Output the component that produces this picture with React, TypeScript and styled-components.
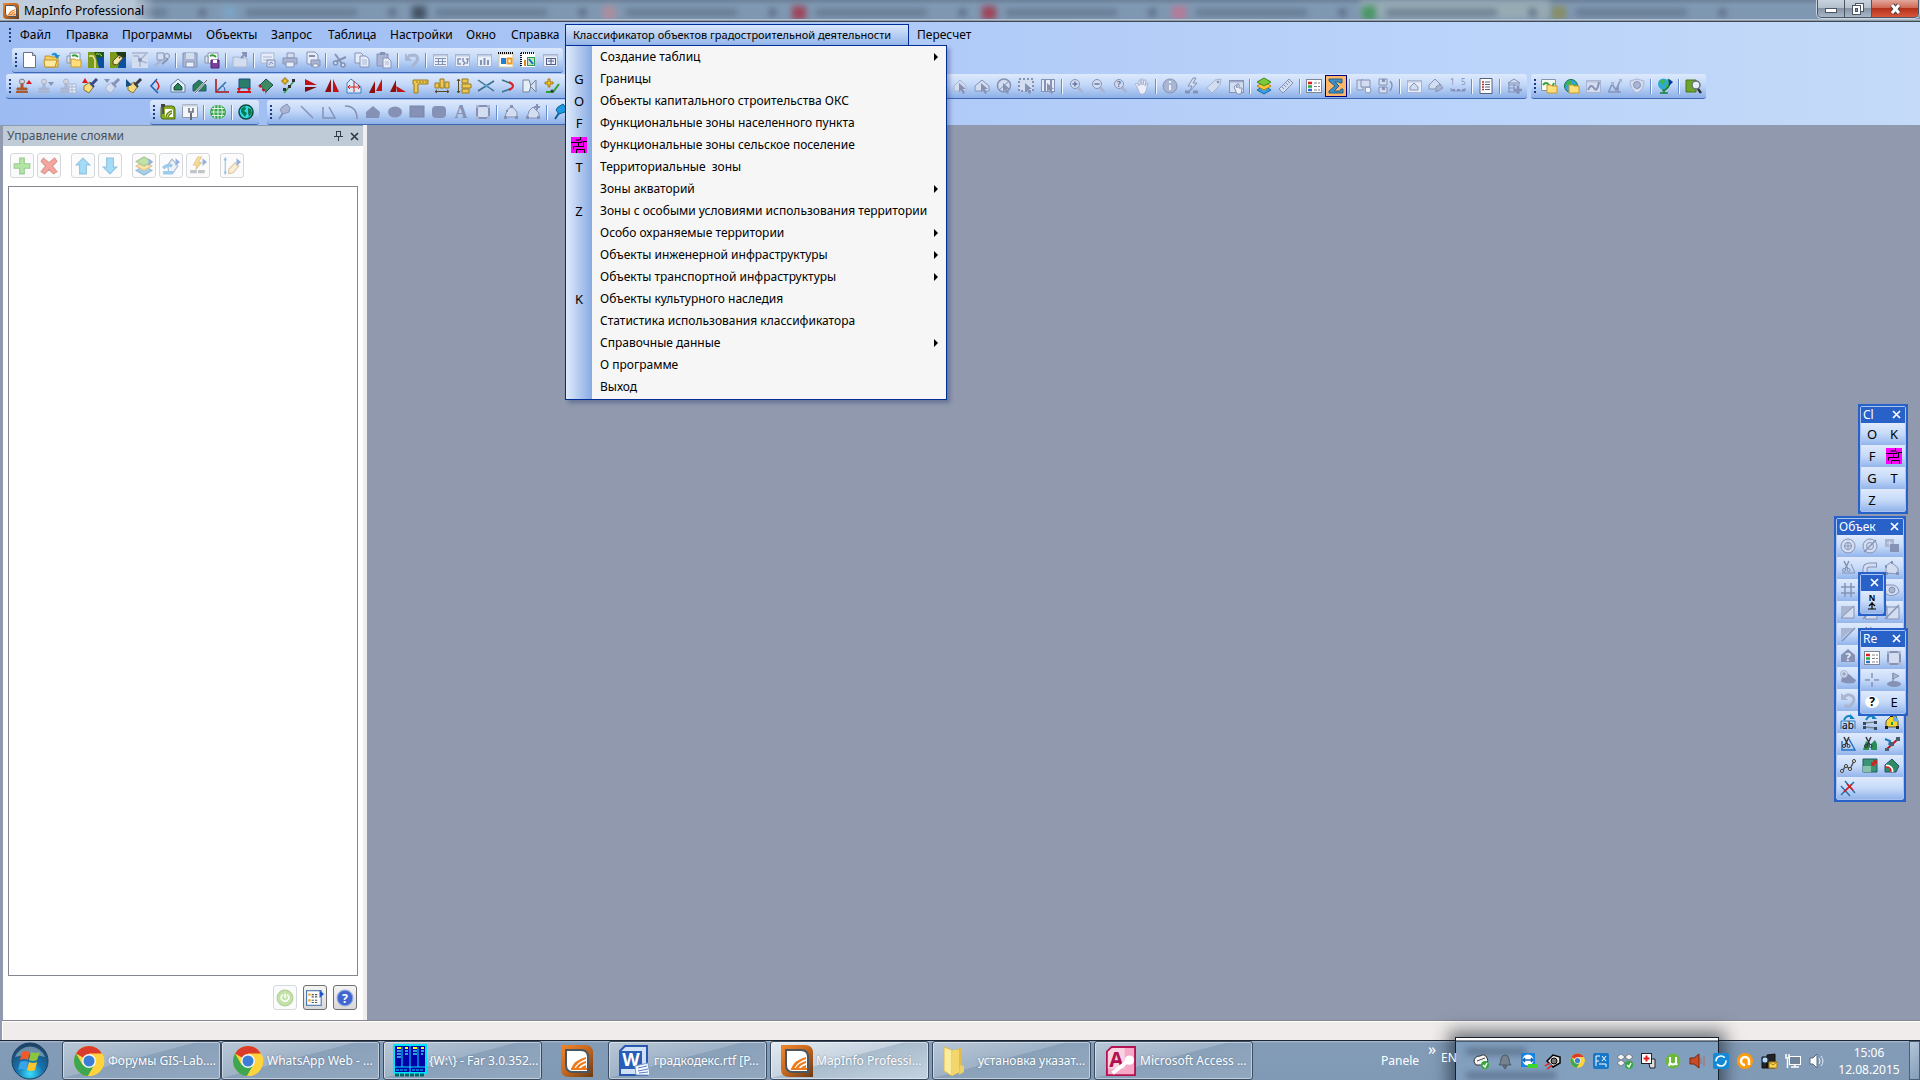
import React from 'react';
import styled, { createGlobalStyle, css } from 'styled-components';

const ui = '"Noto Sans", "Open Sans", "Liberation Sans", sans-serif';

const Global = createGlobalStyle`
  *, *::before, *::after { box-sizing: border-box; }
  html, body { margin: 0; height: 100%; }
  body { font-family: ${ui}; font-size: 12px; line-height: 16px; color: #000; overflow: hidden; }
  #root { height: 100%; }
  button { font: inherit; color: inherit; border: 0; padding: 0; margin: 0; background: none; }
  svg { display: block; flex: none; overflow: visible; }
`;

/* ---------- icon drawings ---------- */

const G = '#8592b6';
const M = '#a9b5d1';
const L = '#d3ddf0';

const line = (d: string, c: string = G, w = 1) => <path d={d} stroke={c} strokeWidth={w} fill="none" />;
const area = (d: string, f: string, c = 'none') => <path d={d} fill={f} stroke={c} />;

const win = (c: string, f: string) => (
  <>
    <rect x="1.5" y="2.5" width="14" height="12" fill={f} stroke={c} />
    <path d="M1 3.5h15" stroke={c} strokeWidth="2" opacity=".6" />
  </>
);
const lens = (
  <>
    <circle cx="7" cy="6" r="4.5" fill={L} stroke={G} />
    <path d="M10 9.5l4.500 5" stroke={M} strokeWidth="3" />
  </>
);
const cursor = (c: string) => area('M7 5v9l2-2 2 4 2-1-2-4h3z', c);
const scissors = (c: string) => (
  <>
    <path d="M4 1l4 8M9 1L5 9" stroke={c} strokeWidth="1.500" fill="none" />
    <circle cx="4" cy="10" r="1.500" fill="none" stroke={c} />
    <circle cx="8.500" cy="10" r="1.500" fill="none" stroke={c} />
  </>
);
const folder = (x: number, y: number) => (
  <path d={`M${x} ${y}h4l1 1h5v7h-10z`} fill="#ffdf7c" stroke="#c99a28" />
);
const stamp = (c: string, b: string) => (
  <>
    <circle cx="6" cy="3.500" r="2.500" fill="#d4d4da" stroke={c} />
    <path d="M5 6h2v4h4v2H1v-2h4z" fill={b} stroke={b} />
    <path d="M0 14h12" stroke={b} strokeWidth="2" />
  </>
);
const brush = (a: string, b: string, c: string) => (
  <>
    <path d="M2 8l6-4 4 4-5 7-5-3z" fill={a} stroke={b} />
    <path d="M8 5l4 4" stroke={c} strokeWidth="2" />
    <path d="M10 6l5-5" stroke={c} strokeWidth="3" />
  </>
);
const legend = (
  <>
    <rect x="0.500" y="1.500" width="15" height="13" fill="#fff" stroke="#7d8894" />
    <path d="M2 5h4" stroke="#e02020" strokeWidth="2.500" />
    <path d="M2 8.500h4" stroke="#25a84a" strokeWidth="2.500" />
    <path d="M2 12h4" stroke="#2f6fd0" strokeWidth="2.500" />
    <path d="M8 5h6M8 8.500h6M8 12h6" stroke="#7a7f88" strokeDasharray="3 1" />
  </>
);
const globe = (sea: string, land: string) => (
  <>
    <circle cx="8" cy="8" r="6.500" fill={sea} stroke="#0d7a3a" />
    <path d="M3 5l4-3 2 2-2 3-3 1zM9 8l4-3 1 4-3 4-2-2z" fill={land} />
  </>
);

const icons: Record<string, React.ReactNode> = {
  newDoc: <>{area('M1.500 .5h9l3 3v12h-12z', '#fff', '#6b7480')}{area('M10.500 .5v3h3', '#cfd6e0', '#6b7480')}</>,
  open: <>{area('M1 4h5l1 1h7v10H1z', '#f6cf62', '#c39222')}{area('M0 8h13l-2 7H1z', '#ffe9a0', '#c39222')}{line('M8 3q3-3 5 1', '#1b8fd6', 2)}{area('M10 3h6l-3 4z', '#1b8fd6')}</>,
  openMap: <>{area('M4 1h10v10H4z', '#fff', '#8694a8')}{line('M6 4q3-2 6 1', '#2e9f3d', 2)}{area('M1 4h3v7H1z', '#dce6f4', '#8694a8')}{folder(5, 7)}</>,
  map1: <><rect width="16" height="16" fill="#7a9a1c" /><path d="M8 5h8v11h-5z" fill="#0a4fa0" /><path d="M1 4h4l2 4v8" stroke="#f1e9a0" strokeWidth="1.500" fill="none" /><path d="M6 0h10v5l-7 1z" fill="#1c5a1c" /><path d="M8 2q4-1 6 2" stroke="#c2d94a" fill="none" /></>,
  map2: <><rect width="16" height="16" fill="#7a9a1c" /><path d="M10 5h6v11H8z" fill="#0a4fa0" /><path d="M6 0h10v5l-7 1z" fill="#1c3a1c" /><path d="M3 9l6-6 4 3-6 7-4-1z" fill="#f3e7b0" stroke="#5b4a1a" /><circle cx="9.500" cy="5.500" r="1" fill="#5b4a1a" /></>,
  mapOff: <><rect width="16" height="16" fill={L} /><path d="M0 1h16M1 4h5l3 5 6 2M8 15V8l6-6" stroke={M} strokeWidth="1.500" fill="none" /><circle cx="8" cy="8" r="2" fill={G} /></>,
  linkOff: <>{line('M1 14l6-6M9 7l5-5', M, 3)}{area('M3 1h7v7H3z', L, G)}{line('M8 12l6-5', G, 2)}<circle cx="13" cy="4" r="2.500" fill={L} stroke={G} /></>,
  save: <>{area('M1 1h14v14H1z', M, G)}{area('M4 1h8v6H4z', L)}{area('M4 10h8v5H4z', '#eaf0fa', G)}</>,
  saveMap: <>{area('M4 1h10v10H4z', '#fff', '#8694a8')}{line('M6 4q3-2 6 1', '#2e9f3d', 2)}{area('M1 4h3v7H1z', '#dce6f4', '#8694a8')}{area('M7 8h8v8H7z', '#7b3f9c', '#552277')}{area('M9 8h4v3H9z', '#fff')}</>,
  closeF: <>{area('M1 5h6l1 1h7v9H1z', L, M)}{line('M9 6l5-5M10 1h4v4', G, 2)}</>,
  winMap: <>{area('M1 1h13v10H1z', '#e6edf9', M)}{line('M3 5h9M3 8h9', M)}{area('M7 8h8v7H7z', L, G)}{line('M9 13l2-3 2 2', G)}</>,
  print: <>{area('M5 1h7v5H5z', L, G)}{area('M1 6h14v6H1z', M, G)}{area('M4 10h8v5H4z', '#e6edf9', G)}</>,
  pdf: <>{area('M3 0h8l3 3v9H3z', '#e6edf9', G)}{line('M5 4h6', G, 2)}{area('M7 8h9v6H7z', M, G)}{area('M9 12h5v3H9z', '#fff', G)}</>,
  cut: <>{line('M3 2l8 11M14 5L3 10', G, 2)}<circle cx="3.500" cy="11" r="2" fill={L} stroke={G} strokeWidth="1.500" /><circle cx="11" cy="13" r="2" fill={L} stroke={G} strokeWidth="1.500" /></>,
  copy: <>{area('M1 1h6l2 2v8H1z', '#e6edf9', G)}{area('M6 4h6l3 3v8H6z', '#e6edf9', G)}{line('M8 8h5M8 10h5M8 12h5', M)}</>,
  paste: <>{area('M1 2h11v12H1z', M, G)}{area('M4 0h5v3H4z', G)}{area('M7 6h5l3 3v7H7z', '#e6edf9', G)}{line('M9 10h4M9 12h4', M)}</>,
  undo: <>{line('M4 4l6-1q5 1 3 6l-5 6', M, 3)}{area('M1 1v8h7z', M)}</>,
  tbl: <>{win(M, '#eaf0fa')}{line('M3 6.500h11M3 9.500h11M3 12.500h11M6.500 6v7M10.500 6v7', G)}</>,
  winGraph: <>{win(M, '#eaf0fa')}{line('M7 7H4v5h3M9 6v3l2 2-2 2M12 7h2l-1 5', G, 1.5)}</>,
  winBar: <>{win(M, '#eaf0fa')}{line('M5 13V8M8.500 13V6M12 13V8', G, 2)}</>,
  layout1: <><rect x="1" y="2" width="14" height="13" fill="#fff" stroke="#d0c79a" /><path d="M0 1h16" stroke="#000" strokeDasharray="1 1" strokeWidth="2" /><rect x="3" y="6" width="5" height="6" fill="#1f7fd4" /><rect x="9.500" y="6.500" width="4" height="5" fill="#fff" stroke="#f09a1c" strokeWidth="2" /></>,
  layout2: <><rect x="1" y="1" width="14" height="14" fill="#fff" /><path d="M1 1h14M1 1v14" stroke="#111" strokeDasharray="1 1" strokeWidth="2" /><path d="M5 14V8" stroke="#e08a1a" strokeWidth="2" /><rect x="7.500" y="5.500" width="7" height="8" fill="#bfe6c4" stroke="#2c9c50" /><path d="M9 7l4 5" stroke="#1b6fc0" strokeWidth="2" /></>,
  winSet: <>{win(M, '#eaf0fa')}<rect x="4.500" y="6.500" width="9" height="6" fill="none" stroke="#4e5c8a" /><path d="M6 9h6M9 7v5" stroke="#4e5c8a" /></>,
  stamp: <>{stamp('#777', '#a75b33')}{area('M10 6l3-4 3 4z', '#e01818')}</>,
  stampOff: <>{stamp(M, M)}{area('M10 4h6l-3 4z', G)}</>,
  stampTbl: <>{stamp(M, M)}{area('M9 6h7v9H9z', '#e6edf9', M)}{line('M9 9h7M9 12h7M12 6v9', M)}</>,
  brush: <>{brush('#f6dc7a', '#8a7430', '#3b4a86')}{area('M0 5l3-5 3 5z', '#e01818')}</>,
  brushOff: <>{brush(L, M, G)}{area('M0 1h6L3 5z', G)}</>,
  brushSel: <>{brush('#f6dc7a', '#8a7430', '#3b3b46')}{area('M0 1v8l6-2z', '#134f86')}</>,
  angle: <>{line('M9 1L3 8l7 7', '#1b5fae', 1.5)}{line('M8 3q5 5 1 9', '#d02020', 1.5)}</>,
  houseBuf: <>{area('M1 14V7l7-6 7 6v7z', '#e7f0fa', '#5a7fae')}{area('M4 12V9l4-4 4 4v3z', '#2b7d55', '#174b3b')}</>,
  houseCut: <>{area('M1 13V7l6-5 7 5v6z', '#2b7d55', '#1c5a80')}{line('M3 15L15 2', '#eef', 2)}{line('M3 15L15 2', '#556')}</>,
  axes: <>{line('M2 1v13h13', '#b01010', 1.5)}{line('M3 13L12 4', '#2a6fae', 1.5)}{line('M8 7q3 2 3 6', '#2a6fae')}</>,
  monitor: <>{area('M3 1h11v9H3z', '#2b7d6a', '#1d4f80')}{line('M1 14h14', '#d01818', 2)}{area('M1 10h4l-2 4zM11 10h4l-2 4z', '#d01818')}</>,
  diamond: <>{area('M8 1l7 6-7 7-6-7z', '#3c8a62', '#1f4f4a')}<path d="M1 7l7 8" stroke="#d01818" strokeWidth="2" strokeDasharray="3 2" /></>,
  nodes: <>{line('M4 15L14 3', '#35a045', 1.5)}{area('M4 0h2v2h2v2H6v2H4V4H2V2h2z', '#f6c52a', '#a67b10')}{area('M12 1h3v3h-3zM3 10h3v3H3zM8 7h3v3H8z', '#333')}</>,
  flipH: <>{area('M3 1l12 6H3z', '#c01414')}{area('M3 9h12L3 14z', '#7c0f0f')}</>,
  flipV: <>{area('M7 1v13H1z', '#8c1010')}{area('M9 1v13h6z', '#c01414')}</>,
  moveBox: <>{area('M1 15V5l4-4 10 8v6z', '#dceaf8', '#447fc0')}{line('M2 9h12M8 3v11M2 9l2-2M2 9l2 2M14 9l-2-2M14 9l-2 2', '#d02020')}</>,
  copyTri: <>{area('M7 3v12H1z', '#8c1010')}{area('M14 1v12H8z', '#c01414')}</>,
  rotTri: <>{area('M6 2v12H0z', '#8c1010')}{area('M6 8l10 6H7z', '#c01414')}</>,
  ruler: <>{area('M1 2h15v4H6v9H2V6H1z', '#edc84f', '#9b7a1e')}{line('M5 3v2M8 3v2M11 3v2M14 3v2', '#9b7a1e')}</>,
  distH: <>{area('M1 5h4v5H1zM6 1h4v9H6zM11 4h4v6h-4z', '#edc84f', '#9b7a1e')}{line('M1 13.500h14M3 12l-2 1.500L3 15M13 12l2 1.500-2 1.500', '#554a20')}</>,
  distV: <>{area('M6 1h6v4H6zM6 6h9v4H6zM6 11h7v4H6z', '#edc84f', '#9b7a1e')}{line('M2.500 1v14M1 3l1.500-2L4 3M1 13l1.500 2L4 13', '#554a20')}</>,
  cross: <>{line('M0 2l16 11', '#3d6f8c', 1.5)}{line('M0 13L16 3', '#3d6f8c', 1.5)}<circle cx="8.500" cy="8" r="1.500" fill="#4aa3e0" /></>,
  curve: <>{line('M2 2l8 3', '#3d6f8c', 1.5)}{line('M2 14l8-3', '#3d6f8c', 1.5)}{line('M9 4q8 4 0 8', '#e02020', 2)}</>,
  polyOff: <>{area('M1 2h6l2 6-2 6H1z', '#e7edf5', '#77839b')}{area('M8 8l6-6v12z', '#cfe0f0', '#77839b')}</>,
  snap: <>{area('M4 1h2v3h3v2H6v3H4V6H1V4h3z', '#f6c52a', '#a67b10')}{line('M2 14h7l6-8', '#2ea02e', 2)}<circle cx="8" cy="13" r="1.500" fill="#333" /></>,
  tools: <>{area('M1 4q0-2 2-2h9q3 0 3 3v10H3q-2 0-2-2z', '#8aac20', '#4f6a10')}{area('M5 5h6q2 0 2 2v6H5z', '#fff')}{line('M6 13q1-5 6-6M8 13q1-3 4-4', '#6a8a1c', 1.5)}{line('M3 2v8', '#555', 2)}{area('M1 0h4v3H1z', '#444')}</>,
  wrench: <>{area('M0.500 .5h15v13H.5z', '#f4f6fa', '#9099a8')}{line('M0 1.500h16', '#c6d0de', 2)}{line('M9 9v7', '#666e7c', 2)}{line('M7 4v4h4V4', '#666e7c', 1.5)}</>,
  globeG: <><ellipse cx="8" cy="8" rx="8" ry="7" fill="#3aa54d" /><path d="M1 8h14M8 1v14M2 4.500h12M2 11.500h12M5 2q-3 6 0 12M11 2q3 6 0 12" stroke="#dff3e3" fill="none" /></>,
  globeC: <><circle cx="8" cy="8" r="7" fill="#2fdbe6" stroke="#0b4a3a" strokeWidth="1.500" />{area('M3 5l4-3 1 3-2 2 3 2-2 4-4-5zM10 4l3 1 1 4-3 4-1-4z', '#0e7a52')}</>,
  pinOff: <>{area('M5 3l5-3 3 4-1 4-6 2-3-4z', M, G)}{line('M6 9l-4 6', G, 2)}</>,
  lineI: line('M2 2l12 12', G, 1.5),
  poly: line('M2 3v11h12L8 3', G, 1.5),
  arc: line('M2 2q12 0 12 13', G, 1.5),
  house: area('M1 14V8l7-6 7 6-1 6z', G),
  ellipse: <ellipse cx="8" cy="8" rx="7" ry="5.500" fill={G} />,
  rect: <rect x="1" y="2" width="14" height="11" fill={G} stroke="#7785ab" />,
  rrect: <rect x="1" y="2" width="14" height="12" rx="4" fill={G} />,
  textA: <text x="8" y="14" fontSize="18" fontWeight="700" textAnchor="middle" fontFamily="Liberation Serif, serif" fill={G}>A</text>,
  frame: <><rect x="2" y="2" width="12" height="12" fill={L} stroke={G} strokeWidth="2" /><path d="M1 1h3v3H1zM12 1h3v3h-3zM1 12h3v3H1zM12 12h3v3h-3z" fill={M} /></>,
  reshape: <>{area('M2 13l2-7 5-4 5 6v5z', L, G)}{area('M1 12h3v3H1zM7 1h3v3H7zM12 12h3v3h-3zM3 6h2v2H3z', G)}</>,
  addNode: <>{area('M2 14l2-7 4-4 6 6v5z', L, G)}{area('M1 12h3v3H1zM12 12h3v3h-3z', G)}{line('M12 0v6M9 3h6', G, 2)}</>,
  pinBlue: <>{area('M5 3l5-3 3 4-1 4-6 2-3-4z', '#1c9be0', '#0a5f9c')}{line('M6 9l-4 6', '#0a5f9c', 2)}{area('M12 1l4 3-4 4z', '#0a3fb0')}</>,
  selPoly: <>{area('M2 13V8l6-6 6 6v5z', L, M)}{cursor(G)}</>,
  selHouse: <>{area('M1 13V8l7-6 7 6v5z', L, G)}{cursor(G)}</>,
  selCirc: <><circle cx="8" cy="7.500" r="6.500" fill={L} stroke={G} strokeWidth="1.500" />{cursor(G)}{line('M3 12L13 3', G)}</>,
  selRect: <><rect x="1" y="1" width="14" height="12" fill={L} stroke={G} strokeDasharray="2 2" strokeWidth="2" />{cursor(G)}</>,
  selGrid: <><rect x="1.500" y="1.500" width="13" height="12" fill="#e6edf9" stroke={G} />{line('M5 1v13M11 1v13', G, 2)}{cursor(G)}</>,
  zin: <>{lens}{line('M4.500 6h5M7 3.500v5', '#6475a4', 1.5)}</>,
  zout: <>{lens}{line('M4.500 6h5', '#6475a4', 1.5)}</>,
  zq: <>{lens}<text x="7" y="9" fontSize="9" fontWeight="700" textAnchor="middle" fill="#6475a4">?</text></>,
  hand: area('M3 9L1 6l2-1 2 3V2h2v5V1h2v6l1-5h2l-1 6 2-3h1l-2 8-2 3H6z', '#e9eef8', M),
  info: <><circle cx="8" cy="8" r="7" fill={M} stroke={G} /><path d="M8 7v5M8 3v2" stroke="#eaf0fa" strokeWidth="2" /></>,
  hot: <>{area('M9 0L4 8h4l-2 5 7-8H9l3-5z', L, G)}{line('M1 14h5M9 14h5', G, 3)}</>,
  tag: <>{area('M1 10l8-8 6-1-1 6-8 8z', L, M)}<circle cx="12" cy="4" r="1.300" fill={G} /></>,
  dragWin: <>{win(G, L)}{area('M6 9l2-2 1 3V6h2v4h3l-1 6H9z', '#e9eef8', G)}</>,
  layers: <>{area('M1 12l7-4 7 4-7 4z', '#3c9fe0', '#1c6aa5')}{area('M1 8l7-4 7 4-7 4z', '#ffc83c', '#bc8510')}{area('M1 4l7-4 7 4-7 4z', '#7cc83c', '#3f8a18')}</>,
  measure: <>{area('M1 11L11 1l4 4L5 15z', L, G)}{line('M4 9l2 2M6 7l2 2M8 5l2 2M10 3l2 2', G)}</>,
  legend,
  sigma: area('M1 1h13v4h-2l-1-1H7l4 4-5 5h6l1-2h2v4H1v-2l6-5-6-5z', '#3f8fc4', '#24618c'),
  distA: <>{area('M1 2h6v10H1z', L, G)}{area('M5 2h9v7H5z', L, G)}<circle cx="12" cy="12" r="3" fill="#eef2fa" stroke={G} /></>,
  distB: <>{area('M1 1h8v6H1zM1 9h8v6H1z', L, G)}{area('M4 1h3v3H4zM4 9h3v3H4z', G)}{line('M12 3q4 4 0 10', G, 1.5)}</>,
  winH: <>{win(M, '#e6edf9')}{area('M4 12V9l4-4 4 4v3z', L, G)}</>,
  dupH: <>{area('M1 11V7l6-6 6 6-3 4z', L, G)}{area('M8 14V9l4-3 3 4z', M, G)}</>,
  scale15: <><text x="0" y="7" fontSize="8" fill={G}>1</text><text x="11" y="7" fontSize="8" fill={G}>5</text>{line('M1 10v3h14v-3', G)}<path d="M2 12h13" stroke={G} strokeWidth="2" strokeDasharray="3 2" /></>,
  list: <>{area('M2 .5h12v15H2z', '#fff', '#56607a')}{line('M4 4h2M4 6.500h2M4 9h2M4 11.500h2', '#b03030', 1.5)}{line('M7 4h5M7 6.500h5M7 9h5M7 11.500h5', '#56607a')}</>,
  dbAdd: <>{area('M8 1l6 4H2z', L, G)}{line('M2 7h12M2 10h7M2 14h12M3 5v9M8 6v8', G)}{line('M12 8v8M8 12h8', G, 2.500)}</>,
  wmsF: <>{area('M0.500 1.500h14v11H.5z', '#f5faf2', '#8694a8')}{line('M2 7q3-4 6 0t5-2', '#2e9f3d', 2)}{folder(6, 7)}</>,
  globeF: <>{globe('#3aa0e6', '#3fb53f')}{folder(6, 7)}</>,
  mapEd: <>{win(M, L)}{line('M3 12q3-7 6-2t5-6', G, 2)}</>,
  nodeEd: <>{line('M2 13l3-7 4 6 4-9M1 14h13M11 7v7', G, 1.5)}{area('M4 4h3v3H4zM12 1h3v3h-3z', M)}</>,
  shield: <>{area('M1 3l7-2 7 2q0 9-7 12Q1 12 1 3z', L, M)}<circle cx="8" cy="7" r="3.500" fill={M} stroke={G} /></>,
  globeStand: <><circle cx="6.500" cy="6" r="5.500" fill="#2ca9d8" /><path d="M3 3q4-3 5 1l-3 3zM8 7l3-1-2 5z" fill="#47b83f" /><path d="M11 1q4 7-3 11H5M7 12v3M3 15h8" stroke="#15803a" strokeWidth="1.500" fill="none" /><path d="M12 1l4 3-4 4z" fill="#0a2fb0" /></>,
  findMap: <>{area('M1 2h10v12H1z', '#6da52b', '#48761a')}<circle cx="11" cy="7" r="4" fill="#e6f1f6" stroke="#66707c" strokeWidth="1.500" />{line('M13 11l3 4', '#333', 2.500)}</>,
  target: <><circle cx="8" cy="8" r="7" fill={L} stroke={G} /><circle cx="8" cy="8" r="3.500" fill="none" stroke={G} />{line('M4 8h8M8 4v8', G)}</>,
  targetS: <><circle cx="8" cy="8" r="7" fill={L} stroke={G} /><circle cx="8" cy="8" r="3.500" fill="none" stroke={G} />{line('M2 14L14 2', G, 1.5)}</>,
  combine: <><rect x="1" y="1" width="9" height="8" fill={M} /><rect x="6" y="6" width="9" height="8" fill={G} />{line('M3 5h5M5.500 3v5', L)}</>,
  sciOff: <>{scissors(G)}{area('M11 4l4 9H2', 'none', G)}</>,
  pipe: <>{line('M3 14V9q0-4 5-4h7', G, 5)}{line('M3 13V9q0-4 5-4h6', L, 3)}</>,
  hull: <>{area('M2 13V6l5-4 7 6v6z', L, G)}{area('M1 5h2v3H1zM7 1h2v3H7zM1 12h3v3H1zM12 12h3v3h-3z', G)}</>,
  hash: line('M5 1v14M11 1v14M1 5h14M1 11h14', G, 1.5),
  ring: <><path d="M1 3h7q6 0 7 7-6 6-13 2z" fill={L} stroke={G} /><circle cx="8" cy="8" r="3" fill={M} stroke={G} /></>,
  sq: <>{area('M1 2h13v12H1z', M)}{area('M1 14L14 2v12z', L, G)}</>,
  sqTri: <>{area('M1 2h13L1 13z', M)}{line('M2 15L15 2', G, 1.5)}</>,
  sqS: <>{area('M3 3h12v12H3z', L, G)}{line('M1 15L15 1M2 1v6', G, 1.5)}</>,
  houseQ: <>{area('M1 14V7l7-6 7 6v7z', G)}<text x="8" y="13" fontSize="11" fontWeight="700" textAnchor="middle" fill="#eef2fa">?</text></>,
  blob: <>{area('M1 12l1-6q5-4 8-1t6 5q-1 6-15 2z', G)}<circle cx="4" cy="4" r="3.500" fill={L} stroke={M} />{line('M4 2v4M2 4h4', G)}</>,
  undoR: <>{line('M4 5q4-4 8-1t0 8-7 1', M, 3)}{area('M1 1v7h7z', M)}</>,
  renAb: <><text x="8" y="15" fontSize="10" textAnchor="middle" fill="#000">ab</text>{line('M1 15V7h14v8', '#2a7fc0')}{line('M4 6q3-6 8-3', '#1583c8', 2)}{area('M10 0l5 5h-5z', '#1583c8')}</>,
  lnArr: <>{line('M2 9l12-1M2 13l12 1', '#7a8797', 1.5)}{area('M1 8h3v3H1zM12 7h3v3h-3zM1 12h3v3H1zM12 13h3v3h-3z', '#3b4a58')}{line('M4 6q3-6 8-3', '#1583c8', 2)}{area('M10 0l5 5h-5z', '#1583c8')}</>,
  yPoly: <>{area('M2 13V7l5-5h5l2 5v6z', '#f8d42a', '#555')}{area('M9 2l5 3v3L9 7z', '#5ab2e6')}{area('M1 12h3v3H1zM12 12h3v3h-3zM6 1h3v2H6z', '#222')}{line('M8 8v3', '#1c9a3a', 2)}</>,
  sciPoly: <>{line('M2 5v9h13L9 3', '#2474c4', 1.5)}{scissors('#333')}</>,
  sciG: <>{area('M1 14L4 5l3 3v6z', '#2b8d55')}{area('M9 14V8l4-4 2 4v6z', '#2b8d55')}{scissors('#333')}</>,
  redLn: <>{line('M3 13L14 3', '#c81414', 2)}{line('M1 3l5 2-1 4', '#1b78c0', 2)}{area('M12 1h4v4h-4zM1 12h4v3H1zM6 6h4v4H6z', '#4d5d6c')}</>,
  spline: <>{line('M2 13l4-5 4 3 4-8', '#555e68', 1.5)}<circle cx="2" cy="13" r="1.500" fill="#fff" stroke="#333" /><circle cx="6" cy="8" r="1.500" fill="#fff" stroke="#333" /><circle cx="10" cy="11" r="1.500" fill="#fff" stroke="#333" /><circle cx="14" cy="3" r="1.500" fill="#fff" stroke="#333" /></>,
  resize: <>{area('M1 1h14v13H1z', '#3a9575', '#1d5c63')}{area('M1 8h8v6H1z', '#86c2a8')}{line('M10 7l4-4M10 4v3h3M14 6V3h-3', '#e01818', 1.5)}</>,
  houseR: <>{area('M1 14V7l7-6 7 7-3 6z', '#2f8a68', '#24526a')}{line('M2 8q6 0 6 6', '#fff', 3)}{line('M2 9q5 0 5 5', '#d01818', 1.5)}</>,
  crossX: <>{line('M1 15L14 2M5 1l10 12M1 6l9 10', '#2672b0', 1.5)}{line('M4 12L12 4M7 4l6 6', '#e01818', 1.5)}</>,
  north: <><text x="8" y="7" fontSize="8" fontWeight="700" textAnchor="middle" fill="#000">N</text>{line('M8 8v7M5 12l3-3 3 3M4 15h8', '#000', 1.2)}</>,
  plusT: line('M8 1v5M8 10v5M1 8h5M10 8h5', G, 1.5),
  flag: <><ellipse cx="8" cy="12" rx="7" ry="3" fill={G} />{line('M7 12V1', G, 1.5)}{area('M7 1l6 3-6 3z', M, G)}</>,
  askB: <><ellipse cx="8" cy="8" rx="7" ry="6" fill="#fff" /><text x="8" y="12" fontSize="12" fontWeight="700" textAnchor="middle" fill="#000">?</text></>,
  magenta: <><rect width="16" height="16" fill="#ff00ff" /><path d="M9.500 0v3h-5M0 5.500h11v-2M7.500 5.500v4h5M2.500 9.500h5M2.500 9.500v3M5.500 12.500h8v3.500M5.500 12.500v3.500M16 4.500h-3.500v5" stroke="#000" fill="none" /></>,
};

const Icon = ({ name, size = 16 }: { name: string; size?: number }) => (
  <svg width={size} height={size} viewBox="0 0 16 16" aria-hidden="true">{icons[name]}</svg>
);

/* ---------- large icons ---------- */

const Chrome = ({ size = 30 }: { size?: number }) => (
  <svg width={size} height={size} viewBox="0 0 32 32" aria-hidden="true">
    <circle cx="16" cy="16" r="15" fill="#ffd33c" />
    <path d="M16 16L3 8.500A15 15 0 0 1 29 8.500H16z" fill="#db3b2b" />
    <path d="M16 16l-6.500 3.700L3 8.500A15 15 0 0 0 15 31l7-12z" fill="#3fa650" />
    <path d="M16 9h13.500A15 15 0 0 1 15 31l7-12z" fill="#ffd33c" />
    <circle cx="16" cy="16" r="7" fill="#f4f6f8" />
    <circle cx="16" cy="16" r="5.500" fill="#3a7fd5" />
  </svg>
);
const MapInfo = ({ size = 32 }: { size?: number }) => (
  <svg width={size} height={size} viewBox="0 0 32 32" aria-hidden="true">
    <defs>
      <linearGradient id="mi" x1="0" x2="1" y2="1"><stop stopColor="#f0862a" /><stop offset=".45" stopColor="#c96a20" /><stop offset="1" stopColor="#6b3a15" /></linearGradient>
    </defs>
    <path d="M0 0h24q8 0 8 8v24H8q-8 0-8-8z" fill="url(#mi)" />
    <path d="M5 5h15q7 0 7 7v15H12q-7 0-7-7z" fill="#fff" stroke="#4b5660" strokeWidth="2" />
    <path d="M10 24q3-9 15-12v2q-9 3-12 10zM14 24q3-6 11-8v2q-6 2-8 6zM19 24q2-3 6-4v4z" fill="#ee7a1c" />
    <path d="M10 24h16" stroke="#ee7a1c" strokeWidth="2" />
  </svg>
);
const Far = () => (
  <svg width="32" height="32" viewBox="0 0 32 32" aria-hidden="true">
    <rect width="32" height="28" fill="#0000a8" stroke="#00e5ff" strokeWidth="2" />
    <path d="M16 0v28M8 2v20M24 2v20M0 22h32" stroke="#00e5ff" />
    <path d="M3 3h4M19 3h4M27 3h3M11 3h3" stroke="#ffff00" strokeWidth="2" />
    <path d="M3 6h4M3 9h4M3 12h4M11 6h3M11 9h3M19 6h4M19 9h4M27 6h3M27 9h2" stroke="#3fd5f0" strokeWidth="1.500" />
    <path d="M2 25h12M18 25h12" stroke="#00e5ff" strokeDasharray="3 1" />
    <path d="M1 30h30" stroke="#006868" strokeWidth="3" strokeDasharray="4 1" />
  </svg>
);
const Word = () => (
  <svg width="32" height="32" viewBox="0 0 32 32" aria-hidden="true">
    <path d="M6 1h22v29H1V6z" fill="#cfe0f7" stroke="#2a58b0" strokeWidth="2" />
    <path d="M1 6h22v18H1z" fill="#2a5db8" />
    <text x="12" y="21" fontSize="18" fontWeight="700" textAnchor="middle" fill="#fff">W</text>
    <path d="M16 21l13-3 2 12H17z" fill="#f6f9ff" stroke="#7c9ac8" />
    <path d="M19 23l9-2M19 26l10-2M20 28l9-1" stroke="#5b7fc0" />
  </svg>
);
const Folder = () => (
  <svg width="32" height="32" viewBox="0 0 32 32" aria-hidden="true">
    <path d="M8 6l10-3 1 24-9 3z" fill="#e2bd48" />
    <path d="M1 2l8 3v26l-8-5z" fill="#fbeb9e" stroke="#dcb850" />
    <path d="M10 5h6v22l-7 4V7z" fill="#f3d76c" />
    <path d="M17 20l4 1v6l-5 3z" fill="#ecd06a" />
  </svg>
);
const Access = () => (
  <svg width="32" height="30" viewBox="0 0 32 32" aria-hidden="true">
    <path d="M6 1h25v30H1V6z" fill="#f6a8c6" stroke="#b31350" strokeWidth="2" />
    <path d="M2 6l5-4h13v22H2z" fill="#f9d3e2" />
    <text x="11" y="22" fontSize="22" fontWeight="700" textAnchor="middle" fill="#b0104f">A</text>
    <circle cx="25" cy="15" r="5" fill="#fff" />
    <path d="M22 17L7 29" stroke="#fff" strokeWidth="4" />
  </svg>
);
const Orb = () => (
  <svg width="38" height="38" viewBox="0 0 38 38" aria-hidden="true">
    <defs>
      <radialGradient id="orb" cx=".5" cy=".85" r=".8"><stop stopColor="#39e0ff" /><stop offset=".45" stopColor="#1673ad" /><stop offset="1" stopColor="#1d4468" /></radialGradient>
    </defs>
    <circle cx="19" cy="19" r="18" fill="url(#orb)" stroke="#1b4160" />
    <path d="M4 15a16 16 0 0 1 30 0q-15-5-30 0z" fill="#fff" opacity=".35" />
    <path d="M11 10q4-2 8 0l-2 8q-4-2-8 0z" fill="#f0592a" />
    <path d="M20 10q4 2 9 0l-3 8q-4 2-8 0z" fill="#8cc63e" />
    <path d="M9 20q4-2 8 0l-2 8q-4-2-8 0z" fill="#3ba3ea" />
    <path d="M18 20q4 2 8 0l-2 8q-4 2-8 0z" fill="#fcc62b" />
  </svg>
);

/* ---------- window frame ---------- */

const Screen = styled.div`
  position: relative;
  display: flex;
  flex-direction: column;
  height: 100vh;
  min-height: 400px;
  overflow: hidden;
  background: #9099ae;
`;
const TitleBar = styled.header`
  position: relative;
  display: flex;
  align-items: flex-start;
  justify-content: space-between;
  height: 22px;
  flex: none;
  background: linear-gradient(#6d8199, #8099b3 5px, #7f97b2 19px, #e4edf6 20px, #3d4854 21px);
`;
const TabGhosts = styled.div`
  position: absolute;
  inset: 0 0 3px 30px;
  display: flex;
  overflow: hidden;
`;
const TabGhost = styled.div<{ $on?: boolean }>`
  display: flex;
  align-items: center;
  gap: 10px;
  flex: none;
  width: 190px;
  padding: 6px 14px 0 2px;
  filter: blur(3px);
  background: ${(p) => (p.$on ? '#97abb4' : 'transparent')};
`;
const GhostIcon = styled.i<{ $c: string }>`
  width: 14px;
  height: 14px;
  opacity: 0.75;
  background: ${(p) => p.$c};
`;
const GhostBar = styled.i`
  flex: 1;
  height: 7px;
  margin-right: 22px;
  background: #5d7088;
  opacity: 0.75;
`;
const GhostX = styled.i`
  width: 7px;
  height: 7px;
  background: #56677e;
`;
const AppTitle = styled.h1`
  position: relative;
  display: flex;
  align-items: center;
  gap: 5px;
  height: 20px;
  margin: 0;
  padding: 2px 12px 0 3px;
  font-size: 12px;
  font-weight: 400;
  background: linear-gradient(90deg, rgba(200, 213, 227, 0.9), rgba(200, 213, 227, 0.8) 85%, rgba(200, 213, 227, 0));
`;
const Caption = styled.div`
  position: relative;
  display: flex;
  height: 18px;
  margin-right: 1px;
  border: 1px solid #4b5664;
  border-top: 0;
  border-radius: 0 0 5px 5px;
  overflow: hidden;
  box-shadow: 0 0 0 1px rgba(255, 255, 255, 0.6);
`;
const CaptionButton = styled.button<{ $close?: boolean }>`
  display: grid;
  place-items: center;
  width: ${(p) => (p.$close ? 46 : 27)}px;
  border-right: ${(p) => (p.$close ? '0' : '1px solid #4b5664')};
  background: ${(p) => (p.$close
    ? 'linear-gradient(#e2a79d, #cf6a56 45%, #b5301a 50%, #d8583c)'
    : 'linear-gradient(#c9d3de, #b4c0cd 45%, #8593a4 50%, #a9b8c8)')};
`;

const Bars = styled.div`
  flex: none;
  padding-left: 3px;
  background: linear-gradient(90deg, #9dbbf3, #bad3fa 75%, #c4daf8);
`;
const Grip = styled.i`
  flex: none;
  width: 3px;
  height: 15px;
  background: linear-gradient(90deg, #1d3a86 2px, transparent 2px);
  mask: repeating-linear-gradient(#000 0 2px, transparent 2px 4px);
`;
const MenuBar = styled.nav`
  display: flex;
  align-items: center;
  height: 26px;
  padding-left: 6px;
`;
const MenuItem = styled.div<{ $w: number }>`
  position: relative;
  width: ${(p) => p.$w}px;
`;
const MenuButton = styled.button<{ $open?: boolean }>`
  display: block;
  width: 100%;
  height: 22px;
  padding: 0 7px;
  border: 1px solid transparent;
  text-align: left;
  white-space: nowrap;
  ${(p) => p.$open && css`
    font-size: 11px;
    border-color: #002d96;
    background: linear-gradient(#d9e7fc, #94b6ea);
  `}
`;
const Dropdown = styled.ul`
  position: absolute;
  z-index: 10;
  top: 21px;
  left: 0;
  width: 382px;
  margin: 0;
  padding: 0 0 1px;
  list-style: none;
  border: 1px solid #002d96;
  background: linear-gradient(90deg, #dfebfc, #88aae2 26px, #f6f6f6 26px);
  box-shadow: 3px 3px 4px rgba(30, 50, 110, 0.35);
`;
const Entry = styled.button`
  display: grid;
  grid-template-columns: 26px 1fr 12px;
  align-items: center;
  width: 100%;
  height: 22px;
  text-align: left;
  white-space: pre;
`;
const Mark = styled.span`
  display: grid;
  place-items: center;
  font-size: 13px;
`;
const EntryText = styled.span`
  padding-left: 8px;
`;
const Arrow = styled.i`
  width: 0;
  border: 4px solid transparent;
  border-left-color: #000;
  border-right: 0;
`;

const ToolRow = styled.div<{ $indent: number; $last?: boolean }>`
  display: flex;
  gap: ${(p) => (p.$last ? 8 : 4)}px;
  height: ${(p) => (p.$last ? 25 : 26)}px;
  padding-left: ${(p) => p.$indent}px;
`;
const Toolbar = styled.div`
  display: flex;
  align-items: center;
  flex: none;
  height: 25px;
  padding: 0 2px 0 3px;
  border-bottom: 1px solid #3f68b4;
  border-radius: 3px;
  background: linear-gradient(#dde9fc, #c3d8f8 45%, #8cb0e8);
  & > ${Grip} { margin-right: 1px; }
`;
const ToolButton = styled.button<{ $on?: boolean }>`
  display: grid;
  place-items: center;
  flex: none;
  width: 22px;
  height: 22px;
  ${(p) => p.$on && css`
    border: 1px solid #000080;
    background: #ffb668;
  `}
`;
const Sep = styled.i`
  flex: none;
  width: 2px;
  height: 15px;
  margin: 0 2px;
  border-left: 1px solid #6a8ccb;
  border-right: 1px solid #f3f8ff;
`;
const Covered = styled.span`
  flex: none;
  width: 386px;
`;

const Tools = ({ items }: { items: string }) => (
  <Toolbar role="toolbar">
    <Grip />
    {items.split(' ').map((n, i) => {
      if (n === '|') return <Sep key={i} />;
      if (n === '_') return <Covered key={i} />;
      return <ToolButton key={i} type="button" aria-label={n} $on={n === 'sigma'}><Icon name={n} /></ToolButton>;
    })}
  </Toolbar>
);

/* ---------- body ---------- */

const Body = styled.main`
  display: flex;
  flex: 1;
  min-height: 0;
  padding-left: 3px;
`;
const Panel = styled.section`
  display: flex;
  flex-direction: column;
  width: 364px;
  border-right: 4px solid #f0eeee;
  background: #fff;
`;
const PanelHead = styled.h2`
  display: flex;
  align-items: center;
  gap: 7px;
  height: 21px;
  margin: 0;
  padding: 0 4px;
  border-top: 1px solid #8c9aab;
  font-size: 12px;
  font-weight: 400;
  color: #48525f;
  background: #bfccd8;
`;
const HeadText = styled.span`
  flex: 1;
`;
const PanelTools = styled.div`
  display: flex;
  gap: 3px;
  padding: 7px 7px 8px;
`;
const PanelButton = styled.button<{ $gap?: boolean; $live?: boolean }>`
  display: grid;
  place-items: center;
  width: 24px;
  height: 25px;
  margin-left: ${(p) => (p.$gap ? 7 : 0)}px;
  border: 1px solid ${(p) => (p.$live ? '#707070' : '#d5d8dc')};
  border-radius: 3px;
  background: ${(p) => (p.$live ? 'linear-gradient(#f4f4f4, #d8d8d8)' : '#fbfbfb')};
  & > svg { opacity: ${(p) => (p.$live ? 1 : 0.45)}; }
`;
const LayerList = styled.div`
  flex: 1;
  margin: 0 5px;
  border: 1px solid #828790;
  background: #fff;
`;
const PanelFoot = styled.div`
  display: flex;
  justify-content: flex-end;
  gap: 6px;
  padding: 9px 6px 10px;
`;
const StatusBar = styled.footer`
  flex: none;
  height: 20px;
  margin-left: 2px;
  border-top: 1px solid #86868f;
  background: #f0eceb;
  box-shadow: inset 0 1px #fff, inset 1px 0 #fff;
`;

/* ---------- floating palettes ---------- */

const Palette = styled.section<{ $top: number; $right: number; $cols: number }>`
  position: absolute;
  top: ${(p) => p.$top}px;
  right: ${(p) => p.$right}px;
  width: ${(p) => p.$cols * 22 + 6}px;
  border: 2px solid #2861c7;
  background: #2861c7;
`;
const PaletteInner = styled.div`
  border: 1px solid #a9c3f0;
  border-radius: 2px;
`;
const PaletteHead = styled.div`
  display: flex;
  align-items: center;
  height: 16px;
  padding: 0 4px 0 2px;
  color: #fff;
  background: #2861c7;
  & > button { padding-bottom: 2px; }
`;
const PaletteTitle = styled.span`
  flex: 1;
  white-space: nowrap;
`;
const PaletteRow = styled.div`
  display: flex;
  height: 22px;
  background: linear-gradient(#dfeafc, #c6daf8 50%, #93b5ec);
`;
const PaletteButton = styled.button`
  display: grid;
  place-items: center;
  width: 22px;
  height: 22px;
  font-size: 13px;
`;
const CloseX = ({ c = '#fff' }: { c?: string }) => (
  <svg width="9" height="9" viewBox="0 0 9 9" aria-hidden="true"><path d="M1 1l7 7M8 1L1 8" stroke={c} strokeWidth="1.700" /></svg>
);

const FloatPalette = (p: { title: string; top: number; right: number; cols: number; rows: string[] }) => (
  <Palette $top={p.top} $right={p.right} $cols={p.cols}>
    <PaletteInner>
      <PaletteHead>
        <PaletteTitle>{p.title}</PaletteTitle>
        <button type="button" aria-label="close"><CloseX /></button>
      </PaletteHead>
      {p.rows.map((r, i) => (
        <PaletteRow key={i}>
          {r.split(' ').map((n, k) => (
            <PaletteButton key={k} type="button" aria-label={n}>
              {n.length === 1 ? n : <Icon name={n} />}
            </PaletteButton>
          ))}
        </PaletteRow>
      ))}
    </PaletteInner>
  </Palette>
);

/* ---------- taskbar ---------- */

const Taskbar = styled.footer`
  position: relative;
  display: flex;
  align-items: stretch;
  flex: none;
  height: 40px;
  border-top: 1px solid #1c2530;
  background: linear-gradient(#a9bdd2, #839bb6 2px, #809ab6);
  color: #fff;
`;
const Start = styled.button`
  display: grid;
  place-items: center;
  width: 60px;
  margin-right: 2px;
`;
const Task = styled.button<{ $active?: boolean; $joined?: boolean }>`
  display: flex;
  align-items: center;
  gap: 3px;
  flex: none;
  width: 159px;
  margin-right: ${(p) => (p.$joined ? 0 : 3)}px;
  padding: 0 3px 0 10px;
  border: 1px solid #3b4c60;
  border-radius: 3px;
  box-shadow: inset 0 0 0 1px rgba(255, 255, 255, 0.45);
  background: ${(p) => (p.$active
    ? 'linear-gradient(165deg, #e3eaf1 0, #c6d3df 45%, #a9bccd 46%, #c3d2df)'
    : 'linear-gradient(165deg, #b9c8d8 0, #9fb2c6 45%, #8aa1ba 46%, #92a8bf)')};
`;
const TaskText = styled.span`
  text-align: left;
  white-space: nowrap;
  text-shadow: 0 0 2px rgba(40, 60, 90, 0.5);
`;
const Pinned = styled.button`
  display: grid;
  place-items: center;
  width: 63px;
`;
const Glow = styled.div`
  position: absolute;
  right: 201px;
  top: -4px;
  width: 264px;
  height: 60px;
  border: 1px solid #14202c;
  background: linear-gradient(#fff 2px, #111c28 3px, #809ebd 4px, #85a1c0);
  box-shadow: 0 0 16px 6px rgba(20, 30, 42, 0.6);
`;
const GlowText = styled.i<{ $top: number; $w: number }>`
  position: absolute;
  left: 10px;
  top: ${(p) => p.$top}px;
  width: ${(p) => p.$w}px;
  height: 7px;
  filter: blur(3px);
  background: #5f7691;
`;
const Tray = styled.div`
  position: relative;
  display: flex;
  align-items: center;
  margin-left: auto;
`;
const TrayWord = styled.span<{ $w: number; $up?: boolean }>`
  width: ${(p) => p.$w}px;
  padding-bottom: ${(p) => (p.$up ? 6 : 0)}px;
`;
const More = styled.button`
  align-self: flex-start;
  width: 18px;
  font-size: 16px;
`;
const TrayButton = styled.button`
  display: grid;
  place-items: center;
  width: 24px;
  height: 24px;
`;
const Clock = styled.time`
  width: 80px;
  line-height: 17px;
  text-align: center;
`;
const ShowDesktop = styled.button`
  align-self: stretch;
  width: 11px;
  border: 1px solid #4c5f76;
  background: linear-gradient(135deg, #b5c7d9, #849db9);
`;

const tray: React.ReactNode[] = [
  <><path d="M1 9q0-6 6-6 5-3 7 2l1 3-6 4H3z" fill="#f6f6f6" stroke="#333" /><path d="M4 8l8-3" stroke="#444" /><circle cx="12" cy="12" r="4" fill="#35a83c" /><path d="M10 12l2 2 2-4" stroke="#fff" strokeWidth="1.500" fill="none" /></>,
  <path d="M2 12q2-2 2-6 1-4 4-4t4 4q0 4 2 6zM6 13h4l-2 3z" fill="#78828e" stroke="#4c5763" />,
  <><rect width="14" height="14" fill="#1685e0" /><circle cx="7" cy="7" r="5.500" fill="#fff" /><path d="M2 7h10M4 5L2 7l2 2M10 5l2 2-2 2" stroke="#1263b8" strokeWidth="1.500" fill="none" /><path d="M7 13h9" stroke="#3ed42a" strokeWidth="4" /></>,
  <><path d="M2 8l6-6 7 2v6l-7 4z" fill="#e8e8e8" stroke="#000" strokeWidth="1.500" /><circle cx="9" cy="8" r="3" fill="#777" stroke="#000" /><path d="M0 13l5-3M2 16l5-4" stroke="#e03030" strokeWidth="2" /><path d="M1 15l5-4" stroke="#3ad0f0" /></>,
  null,
  <><rect width="16" height="16" rx="2" fill="#1878c8" /><path d="M3 13V3h4M3 8h3M9 3l4 5M13 3L9 8M6 11h7v3" stroke="#fff" fill="none" /></>,
  <><path d="M4 1l4 3-4 3-4-3zM12 1l4 3-4 3-4-3zM4 7l4 3-4 3-4-3zM12 7l4 3-4 3-4-3z" fill="#f4f4f4" stroke="#444" strokeWidth=".500" /><circle cx="12" cy="12" r="4" fill="#2ea83c" /><path d="M10 12l2 2 2-4" stroke="#fff" strokeWidth="1.500" fill="none" /></>,
  <><path d="M7 6h7v9H9z" fill="#ddd" stroke="#222" /><rect x=".5" y=".500" width="10" height="10" fill="#fff" stroke="#222" /><path d="M5.500 2.500v6M2.500 5.500h6" stroke="#e02020" strokeWidth="2" /></>,
  <><circle cx="8" cy="8" r="7.500" fill="#6cb83c" /><path d="M5 4v6q3 3 6 0V4M11 10l1 2M5 9l-1 4" stroke="#fff" strokeWidth="2" fill="none" /></>,
  <><path d="M1 5h4l5-4v14l-5-4H1z" fill="#c84a26" stroke="#7a2510" /><path d="M12 5v6M15 3v10" stroke="#b8665a" /></>,
  <><rect width="16" height="16" rx="2" fill="#138ad6" /><circle cx="8" cy="8" r="5" fill="none" stroke="#fff" strokeWidth="1.700" strokeDasharray="12 3" /></>,
  <><circle cx="8" cy="8" r="8" fill="#ff9c0a" /><path d="M12 12V8a4 4 0 1 0-4 4" stroke="#fff" strokeWidth="2.500" fill="none" /></>,
  <><path d="M1 4h5v11H1zM6 2l8-1v14H6z" fill="#222" stroke="#111" /><circle cx="4" cy="7" r="3" fill="#b8d8f0" stroke="#246" /><path d="M8 9h8v6H8z" fill="#f8d25a" stroke="#a77d10" /><path d="M8 9l4 3 4-3" stroke="#a77d10" fill="none" /></>,
  <><rect x="4.500" y="3.500" width="11" height="8" fill="#6f8499" stroke="#fff" /><path d="M6 14h8M10 11v3M2.500 6v9M1 1v4h3V1" stroke="#fff" strokeWidth="1.500" fill="none" /></>,
  <><path d="M1 5h3l4-4v14l-4-4H1z" fill="#fff" stroke="#5c6d80" /><path d="M10 5q2 3 0 6M12 3q4 5 0 10" stroke="#e6edf5" fill="none" /></>,
];

const menu: [string, number][] = [
  ['Файл', 46], ['Правка', 56], ['Программы', 84], ['Объекты', 65], ['Запрос', 57],
  ['Таблица', 62], ['Настройки', 76], ['Окно', 45], ['Справка', 62],
  ['Классификатор объектов градостроительной деятельности', 344], ['Пересчет', 68],
];
const entries: [string, string, boolean][] = [
  ['', 'Создание таблиц', true],
  ['G', 'Границы', false],
  ['O', 'Объекты капитального строительства ОКС', false],
  ['F', 'Функциональные зоны населенного пункта', false],
  ['magenta', 'Функциональные зоны сельское поселение', false],
  ['T', 'Территориальные  зоны', false],
  ['', 'Зоны акваторий', true],
  ['Z', 'Зоны с особыми условиями использования территории', false],
  ['', 'Особо охраняемые территории', true],
  ['', 'Объекты инженерной инфраструктуры', true],
  ['', 'Объекты транспортной инфраструктуры', true],
  ['K', 'Объекты культурного наследия', false],
  ['', 'Статистика использования классификатора', false],
  ['', 'Справочные данные', true],
  ['', 'О программе', false],
  ['', 'Выход', false],
];
const ghosts = ['#8aa0b8', '#7ba8c8', '#2f3b48', '#b98c98', '#a8283a', '#a8283a', '#c8708c', '#2f8f4a', '#8a8a4a'];

const fly = <path d="M12 1l4 3.500-4 3.500z" fill="#1c56c8" />;

const panelButtons: [string, boolean, React.ReactNode][] = [
  ['add', false, <path d="M6 1h4v5h5v4h-5v5H6v-5H1V6h5z" fill="#5ccf3a" stroke="#2b8f1a" />],
  ['remove', false, <path d="M3 1l5 4 5-4 2 3-4 4 4 5-3 2-4-4-4 4-3-2 4-5-4-4z" fill="#f0402c" stroke="#b01c10" />],
  ['up', true, <path d="M8 1l6 6h-3v8H5V7H2z" fill="#3cb8f4" stroke="#1580c0" />],
  ['down', false, <path d="M8 15l6-6h-3V1H5v8H2z" fill="#3cb8f4" stroke="#1580c0" />],
  ['layers', true, <>{icons.layers}{fly}</>],
  ['style', false, <><path d="M5 7l4-5 5 6-4 6H6z" fill="#dbe9f6" stroke="#3a6ea5" /><path d="M1 10q4-4 8-2M1 14h9" stroke="#2a8fd8" strokeWidth="3" fill="none" />{fly}</>],
  ['hotlink', false, <><path d="M8 0L4 7h3l-1 4 5-6H8l3-5z" fill="#ffc21c" stroke="#c48a10" /><path d="M1 13h6M8 13h6" stroke="#7a828c" strokeWidth="3" />{fly}</>],
  ['labels', true, <><path d="M2 1v14M1 3l1-2 1 2M1 13l1 2 1-2" stroke="#2c7ad0" fill="none" /><path d="M5 11l6-6 3 3-5 6-4 1z" fill="#f6dfa6" stroke="#b38a3c" />{fly}</>],
];

export default function App() {
  return (
    <Screen>
      <Global />
      <TitleBar>
        <TabGhosts>
          {ghosts.map((c, i) => (
            <TabGhost key={i} $on={i === 7}><GhostIcon $c={c} /><GhostBar /><GhostX /></TabGhost>
          ))}
        </TabGhosts>
        <AppTitle><MapInfo size={16} />MapInfo Professional</AppTitle>
        <Caption>
          <CaptionButton type="button" aria-label="minimize">
            <svg width="12" height="12" viewBox="0 0 12 12"><rect x=".5" y="5.500" width="11" height="4" fill="#fff" stroke="#4b5664" /></svg>
          </CaptionButton>
          <CaptionButton type="button" aria-label="restore">
            <svg width="12" height="12" viewBox="0 0 12 12"><rect x="3.500" y=".5" width="8" height="8" fill="#fff" stroke="#4b5664" /><rect x=".5" y="2.500" width="8" height="9" fill="#fff" stroke="#4b5664" /><rect x="3.500" y="5.500" width="2" height="3" fill="#8593a4" stroke="#4b5664" /></svg>
          </CaptionButton>
          <CaptionButton type="button" aria-label="close" $close>
            <svg width="13" height="12" viewBox="0 0 13 12"><path d="M3 2l7 8M10 2l-7 8" stroke="#51404a" strokeWidth="5" /><path d="M3 2l7 8M10 2l-7 8" stroke="#fff" strokeWidth="3" /></svg>
          </CaptionButton>
        </Caption>
      </TitleBar>

      <Bars>
        <MenuBar>
          <Grip />
          {menu.map(([t, w], i) => (
            <MenuItem key={t} $w={w}>
              <MenuButton type="button" $open={i === 9}>{t}</MenuButton>
              {i === 9 && (
                <Dropdown>
                  {entries.map(([m, label, sub]) => (
                    <li key={label}>
                      <Entry type="button">
                        <Mark>{m.length > 1 ? <Icon name={m} /> : m}</Mark>
                        <EntryText>{label}</EntryText>
                        {sub && <Arrow />}
                      </Entry>
                    </li>
                  ))}
                </Dropdown>
              )}
            </MenuItem>
          ))}
        </MenuBar>
        <ToolRow $indent={9}>
          <Tools items="newDoc open openMap map1 map2 mapOff linkOff | save saveMap | closeF | winMap print pdf | cut copy paste | undo | tbl winGraph winBar layout1 layout2 winSet" />
        </ToolRow>
        <ToolRow $indent={3}>
          <Tools items="stamp stampOff stampTbl brush brushOff brushSel angle houseBuf houseCut axes monitor diamond nodes flipH flipV moveBox copyTri rotTri ruler distH distV cross curve polyOff snap _ selPoly selHouse selCirc selRect selGrid | zin zout zq hand | info hot tag dragWin | layers measure | legend sigma | distA distB | winH dupH scale15 | list | dbAdd" />
          <Tools items="wmsF globeF mapEd nodeEd shield | globeStand | findMap" />
        </ToolRow>
        <ToolRow $indent={147} $last>
          <Tools items="tools wrench | globeG | globeC" />
          <Tools items="pinOff lineI poly arc house ellipse rect rrect textA frame | reshape addNode | pinBlue" />
        </ToolRow>
      </Bars>

      <Body>
        <Panel>
          <PanelHead>
            <HeadText>Управление слоями</HeadText>
            <svg width="9" height="10" viewBox="0 0 9 10"><path d="M2.500 0v5.500M6.500 0v5.500M2 .5h5M0 5.500h9M4.500 6v4" stroke="#333b46" fill="none" /></svg>
            <CloseX c="#333b46" />
          </PanelHead>
          <PanelTools>
            {panelButtons.map(([n, gap, d]) => (
              <PanelButton key={n} type="button" aria-label={n} $gap={gap}>
                <svg width="18" height="18" viewBox="0 0 16 16">{d}</svg>
              </PanelButton>
            ))}
          </PanelTools>
          <LayerList />
          <PanelFoot>
            <PanelButton type="button" aria-label="apply">
              <svg width="18" height="18" viewBox="0 0 16 16"><circle cx="8" cy="8" r="7" fill="#7cc83c" stroke="#5a9c28" /><path d="M6 5q-3 3 0 5t4 0q3-2 0-5M8 4v4" stroke="#fff" strokeWidth="1.500" fill="none" /></svg>
            </PanelButton>
            <PanelButton type="button" aria-label="options" $live>
              <svg width="18" height="18" viewBox="0 0 16 16"><rect x=".5" y="1.500" width="13" height="13" fill="#fff" stroke="#4a78b0" /><path d="M2 5h2M2 10h2" stroke="#f0a020" strokeWidth="2" /><path d="M5 5h6M5 7h6M5 10h6M5 12h6" stroke="#555" strokeDasharray="2 1" />{fly}</svg>
            </PanelButton>
            <PanelButton type="button" aria-label="help" $live>
              <svg width="18" height="18" viewBox="0 0 16 16"><circle cx="8" cy="8" r="7" fill="#3f66d0" stroke="#8fa6dc" /><text x="8" y="12" fontSize="11" fontWeight="700" textAnchor="middle" fill="#fff">?</text></svg>
            </PanelButton>
          </PanelFoot>
        </Panel>
      </Body>
      <StatusBar />

      <FloatPalette title="Cl" top={404} right={12} cols={2} rows={['O K', 'F magenta', 'G T', 'Z']} />
      <FloatPalette
        title="Объек" top={516} right={14} cols={3}
        rows={['target targetS combine', 'sciOff pipe hull', 'hash hash ring', 'sq sqS sqS', 'sqTri sciOff', 'houseQ', 'blob', 'undoR',
          'renAb lnArr yPoly', 'sciPoly sciG redLn', 'spline resize houseR', 'crossX']}
      />
      <FloatPalette title="" top={572} right={34} cols={1} rows={['north']} />
      <FloatPalette title="Re" top={628} right={12} cols={2} rows={['legend frame', 'plusT flag', 'askB E']} />

      <Taskbar>
        <Glow><GlowText $top={10} $w={60} /><GlowText $top={34} $w={90} /></Glow>
        <Start type="button" aria-label="start"><Orb /></Start>
        <Task type="button" $joined><Chrome size={32} /><TaskText>Форумы GIS-Lab....</TaskText></Task>
        <Task type="button"><Chrome size={32} /><TaskText>WhatsApp Web - ...</TaskText></Task>
        <Task type="button"><Far /><TaskText>{'{W:\\} - Far 3.0.352...'}</TaskText></Task>
        <Pinned type="button" aria-label="MapInfo"><MapInfo /></Pinned>
        <Task type="button"><Word /><TaskText>градкодекс.rtf [Р...</TaskText></Task>
        <Task type="button" $active><MapInfo /><TaskText>MapInfo Professi...</TaskText></Task>
        <Task type="button"><Folder /><TaskText>установка указат...</TaskText></Task>
        <Task type="button"><Access /><TaskText>Microsoft Access ...</TaskText></Task>
        <Tray>
          <TrayWord $w={42}>Panele</TrayWord>
          <More type="button">»</More>
          <TrayWord $w={28} $up>EN</TrayWord>
          {tray.map((d, i) => (
            <TrayButton key={i} type="button" aria-label={`tray ${i + 1}`}>
              {d ? <svg width="16" height="16" viewBox="0 0 16 16">{d}</svg> : <Chrome size={15} />}
            </TrayButton>
          ))}
          <Clock>15:06<br />12.08.2015</Clock>
          <ShowDesktop type="button" aria-label="show desktop" />
        </Tray>
      </Taskbar>
    </Screen>
  );
}
